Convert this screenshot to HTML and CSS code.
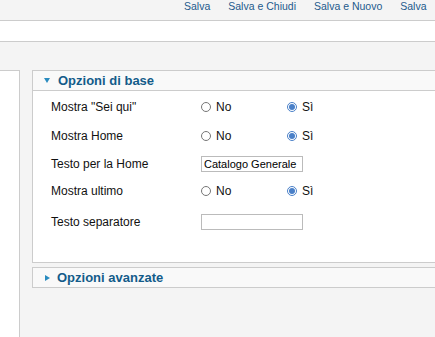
FILE: index.html
```html
<!DOCTYPE html>
<html lang="it">
<head>
    <meta charset="UTF-8">
    <title>Opzioni</title>
    <link rel="stylesheet" href="styles.css">
</head>
<body>
    <div class="toolbar">
        <a href="#">Salva</a>
        <a href="#">Salva e Chiudi</a>
        <a href="#">Salva e Nuovo</a>
        <a href="#">Salva</a>
    </div>
    <div class="subbar"></div>
    <div class="main">
        <div class="left-col"></div>
        <div class="right-col">
            <div class="pane">
                <div class="pane-head"><span class="arrow down"></span>Opzioni di base</div>
                <div class="pane-body">
                    <div class="row">
                        <label>Mostra "Sei qui"</label>
                        <span class="opt"><input type="radio" name="r1"> No</span>
                        <span class="opt"><input type="radio" name="r1" checked> Sì</span>
                    </div>
                    <div class="row">
                        <label>Mostra Home</label>
                        <span class="opt"><input type="radio" name="r2"> No</span>
                        <span class="opt"><input type="radio" name="r2" checked> Sì</span>
                    </div>
                    <div class="row short">
                        <label>Testo per la Home</label>
                        <input type="text" class="field" value="Catalogo Generale">
                    </div>
                    <div class="row short">
                        <label>Mostra ultimo</label>
                        <span class="opt"><input type="radio" name="r3"> No</span>
                        <span class="opt"><input type="radio" name="r3" checked> Sì</span>
                    </div>
                    <div class="row last">
                        <label>Testo separatore</label>
                        <input type="text" class="field" value="">
                    </div>
                </div>
            </div>
            <div class="pane closed">
                <div class="pane-head"><span class="arrow right"></span>Opzioni avanzate</div>
            </div>
        </div>
    </div>
</body>
</html>
```
FILE: styles.css
```css
body {
    margin: 0;
    font-family: "Liberation Sans", Arial, sans-serif;
    background-color: #f4f4f4;
    height: 337px;
    overflow: hidden;
}
.toolbar {
    height: 20px;
    border-bottom: 1px solid #cccccc;
    display: flex;
    gap: 18px;
    padding-left: 184px;
    white-space: nowrap;
}
.toolbar a {
    color: #235a8c;
    font-size: 10.5px;
    text-decoration: none;
    line-height: 12px;
}
.subbar {
    height: 20px;
    background-color: #fff;
    border-bottom: 1px solid #cccccc;
}
.main {
    display: flex;
    padding-top: 27px;
    gap: 12px;
}
.left-col {
    width: 19px;
    height: 270px;
    background-color: #fff;
    border: 1px solid #cccccc;
    border-left: none;
    margin-top: 1px;
    flex-shrink: 0;
}
.right-col {
    flex: 1;
    margin-top: 1px;
}
.pane {
    border: 1px solid #cccccc;
    border-right: none;
    background-color: #fff;
    margin-bottom: 4px;
}
.pane-head {
    height: 19px;
    background-color: #f9f9f9;
    border-bottom: 1px solid #cccccc;
    color: #135c8a;
    font-weight: bold;
    font-size: 13px;
    line-height: 19px;
    padding-left: 11px;
}
.closed .pane-head {
    border-bottom: none;
}
.arrow {
    display: inline-block;
    width: 0;
    height: 0;
    margin-right: 8px;
    vertical-align: middle;
}
.arrow.down {
    border-left: 3.5px solid transparent;
    border-right: 3.5px solid transparent;
    border-top: 5px solid #2a8bbf;
    position: relative;
    top: -1px;
}
.arrow.right {
    border-top: 3.5px solid transparent;
    border-bottom: 3.5px solid transparent;
    border-left: 5px solid #2a8bbf;
    margin-left: 1px;
    margin-right: 7px;
    position: relative;
    top: -1px;
}
.pane-body {
    padding: 1px 0 26px 18px;
}
.row {
    display: flex;
    align-items: center;
    height: 29px;
    font-size: 12px;
    color: #111;
}
.row.short {
    height: 27px;
}
.row.last {
    margin-top: 3px;
}
.row label {
    width: 150px;
}
.opt {
    width: 86px;
    display: flex;
    align-items: center;
}
.opt input {
    width: 10px;
    height: 10px;
    margin: 0 5px 0 0;
    accent-color: #4a80c8;
}
.field {
    width: 96px;
    height: 14px;
    border: 1px solid #bbbbbb;
    padding: 0 2px;
    font-family: "Liberation Sans", Arial, sans-serif;
    font-size: 11px;
    margin: 0;
}
```
